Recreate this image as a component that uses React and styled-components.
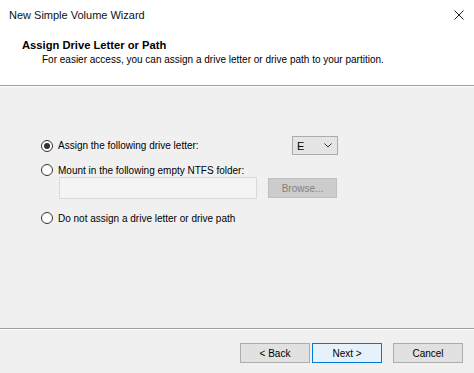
import React from "react"
import styled, { createGlobalStyle } from "styled-components"

const Global = createGlobalStyle`
  body {
    margin: 0;
    font-family: "Liberation Sans", Arial, sans-serif;
    font-size: 10px;
    color: #000;
  }
`

export default function App() {
  return (
    <Window>
      <Global />
      <Header>
        <TitleBar>
          <span>New Simple Volume Wizard</span>
          <CloseIcon viewBox="0 0 10 10">
            <path d="M0.5 0.5 L9.5 9.5 M9.5 0.5 L0.5 9.5" stroke="#222" strokeWidth="1" />
          </CloseIcon>
        </TitleBar>
        <Heading>Assign Drive Letter or Path</Heading>
        <Subtitle>For easier access, you can assign a drive letter or drive path to your partition.</Subtitle>
      </Header>

      <Content>
        <LetterRow>
          <Option>
            <Radio $checked />
            <span>Assign the following drive letter:</span>
          </Option>
          <Select>
            <span>E</span>
            <Chevron viewBox="0 0 8 5">
              <path d="M0.5 0.5 L4 4 L7.5 0.5" fill="none" stroke="#333" strokeWidth="1" />
            </Chevron>
          </Select>
        </LetterRow>
        <Option>
          <Radio />
          <span>Mount in the following empty NTFS folder:</span>
        </Option>
        <FolderRow>
          <PathField />
          <BrowseButton disabled>Browse...</BrowseButton>
        </FolderRow>
        <Option>
          <Radio />
          <span>Do not assign a drive letter or drive path</span>
        </Option>
      </Content>

      <Footer>
        <Button>&lt; Back</Button>
        <Button $primary>Next &gt;</Button>
        <Button $gap>Cancel</Button>
      </Footer>
    </Window>
  )
}

const Window = styled.div`
  width: 474px;
  height: 373px;
  display: flex;
  flex-direction: column;
  background: #f0f0f0;
  overflow: hidden;
`

const Header = styled.div`
  height: 85px;
  background: #fff;
  border-bottom: 1px solid #a0a0a0;
  box-shadow: 0 1px 0 #fff;
  display: flex;
  flex-direction: column;
`

const TitleBar = styled.div`
  height: 30px;
  padding: 0 10px 0 9px;
  display: flex;
  align-items: center;
  justify-content: space-between;
  font-size: 11px;
  color: #111;
`

const CloseIcon = styled.svg`
  width: 10px;
  height: 10px;
`

const Heading = styled.div`
  margin: 8px 0 0 22px;
  font-weight: bold;
  font-size: 11.2px;
  line-height: 14px;
`

const Subtitle = styled.div`
  margin: 1px 0 0 42px;
  line-height: 14px;
`

const Content = styled.div`
  flex: 1;
  margin-top: 1px;
  padding: 49px 0 0 41px;
  display: flex;
  flex-direction: column;
`

const LetterRow = styled.div`
  width: 297px;
  height: 19px;
  display: flex;
  align-items: center;
  justify-content: space-between;
  margin-bottom: 8px;
`

const Option = styled.label`
  height: 14px;
  display: flex;
  align-items: center;
  gap: 5px;
`

const Radio = styled.span`
  width: 12px;
  height: 12px;
  box-sizing: border-box;
  border: 1px solid #333;
  border-radius: 50%;
  background: #fff;
  display: flex;
  align-items: center;
  justify-content: center;
  &::after {
    content: "";
    width: 6px;
    height: 6px;
    border-radius: 50%;
    background: ${(p) => (p.$checked ? "#333" : "transparent")};
  }
`

const Select = styled.div`
  width: 46px;
  height: 19px;
  box-sizing: border-box;
  border: 1px solid #acacac;
  background: #e5e5e5;
  display: flex;
  align-items: center;
  justify-content: space-between;
  padding: 0 5px 0 4px;
  font-size: 11px;
`

const Chevron = styled.svg`
  width: 8px;
  height: 5px;
`

const FolderRow = styled.div`
  display: flex;
  align-items: center;
  gap: 11px;
  margin: 0 0 12px 18px;
`

const PathField = styled.div`
  width: 198px;
  height: 22px;
  box-sizing: border-box;
  border: 1px solid #d9d9d9;
  background: #f4f4f4;
`

const BrowseButton = styled.button`
  width: 69px;
  height: 20px;
  box-sizing: border-box;
  border: 1px solid #bfbfbf;
  background: #cccccc;
  color: #838383;
  font-family: inherit;
  font-size: 10px;
  padding: 0;
`

const Footer = styled.div`
  height: 45px;
  border-top: 1px solid #a0a0a0;
  box-shadow: inset 0 1px 0 #fff;
  display: flex;
  justify-content: flex-end;
  align-items: flex-start;
  padding: 14px 11px 0 0;
  box-sizing: border-box;
  gap: 2px;
`

const Button = styled.button`
  width: 70px;
  height: 20px;
  box-sizing: border-box;
  border: 1px solid ${(p) => (p.$primary ? "#0078d7" : "#adadad")};
  background: ${(p) => (p.$primary ? "#e5f1fb" : "#e1e1e1")};
  color: #000;
  font-family: inherit;
  font-size: 10px;
  padding: 0;
  margin-left: ${(p) => (p.$gap ? "9px" : "0")};
`
